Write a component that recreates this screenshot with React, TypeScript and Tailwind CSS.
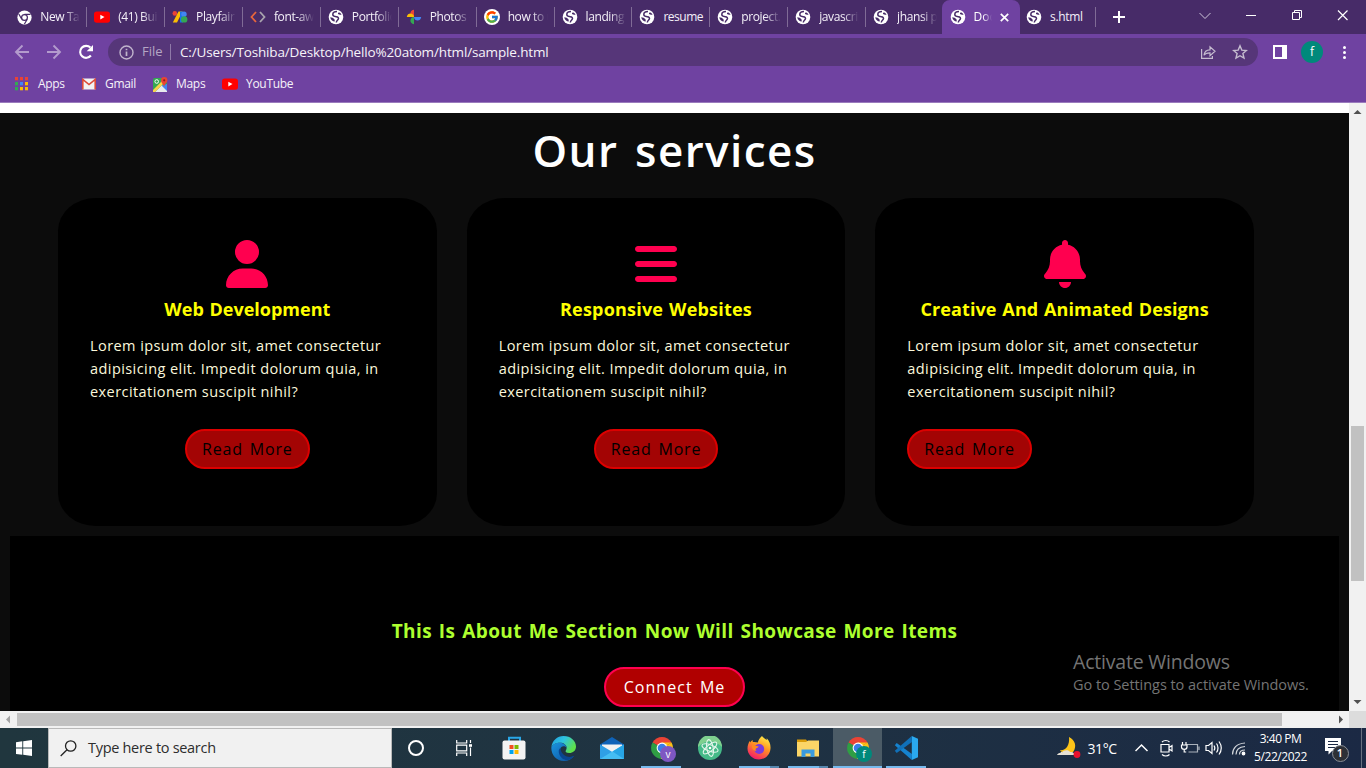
import type { ReactNode } from "react";
import { FaUser, FaBars, FaBell } from "react-icons/fa6";
import { FcGoogle } from "react-icons/fc";

function Globe() {
  return (
    <svg width="16" height="16" viewBox="0 0 16 16">
      <circle cx="8" cy="8" r="7.3" fill="#fff" />
      <path
        d="M9 2.600C6.800 2.600 4.800 3.800 4.800 5.600c0 1.700 1.700 2 3.400 2.100 2 .1 2.900 1.500 1.900 2.800-.8 1-1.600 1.100-1.800 3"
        fill="none"
        stroke="#472b68"
        strokeWidth="1.500"
      />
      <path d="M2.200 8.200c1.800.2 3.400.7 4.200 2 .5.800.2 1.500.4 2.300-2.300-.2-4.200-1.900-4.600-4.300zM10 3.800l1.500-.4c1 .6 1.700 1.300 2.100 2.200-1.300.4-2.700.2-3.600-.5z" fill="#472b68" />
    </svg>
  );
}

function ChromeMono() {
  return (
    <svg width="15" height="15" viewBox="0 0 16 16">
      <circle cx="8" cy="8" r="7.6" fill="#fff" />
      <circle cx="8" cy="8" r="3.1" fill="none" stroke="#472b68" strokeWidth="1.3" />
      <path d="M8 4.6h6.4M5.1 9.8 1.9 4.3M10.9 9.8 7.8 15.2" stroke="#472b68" strokeWidth="1.3" />
    </svg>
  );
}

function YouTube() {
  return (
    <svg width="16" height="16" viewBox="0 0 16 16">
      <rect y="2.4" width="16" height="11.4" rx="2.8" fill="#f00" />
      <path d="M6.3 5.7v4.8l4.2-2.4z" fill="#fff" />
    </svg>
  );
}

function Fonts() {
  return (
    <svg width="16" height="16" viewBox="0 0 16 16">
      <circle cx="2.8" cy="4.4" r="2.3" fill="#ea4335" />
      <path d="M6.500 2.500h4L5 13.500H.800z" fill="#fbbc04" />
      <rect x="8" y="2.500" width="3" height="11" fill="#1a73e8" />
      <circle cx="12" cy="5.200" r="2.700" fill="#4285f4" />
      <circle cx="12.200" cy="10.400" r="3.200" fill="#34a853" />
    </svg>
  );
}

function CodeMark() {
  return (
    <svg width="16" height="16" viewBox="0 0 16 16" fill="none" strokeWidth="1.8">
      <path d="M6 3 1.5 8 6 13" stroke="#e8663c" />
      <path d="M10 3 14.5 8 10 13" stroke="#a9a4ae" />
    </svg>
  );
}

function Photos() {
  return (
    <svg width="16" height="16" viewBox="0 0 16 16">
      <path d="M8 8V.800A3.700 3.700 0 0 0 8 8z" fill="#ea4335" />
      <path d="M8 8V.800c-5 .5-4.500 7.200 0 7.200z" fill="#ea4335" />
      <path d="M8 8h7.200c-.5-5-7.200-4.500-7.200 0z" fill="#4285f4" transform="rotate(0 8 8) scale(1 -1) translate(0 -16)" />
      <path d="M8 8v7.200c-5-.5-4.500-7.200 0-7.200z" fill="#34a853" />
      <path d="M8 8H.800c.5-5 7.200-4.500 7.200 0z" fill="#fbbc04" />
    </svg>
  );
}

function GoogleBadge() {
  return (
    <span className="flex size-4 items-center justify-center rounded-full bg-white">
      <FcGoogle size={14} />
    </span>
  );
}

const tabs: { title: string; icon: ReactNode }[] = [
  { title: "New Tab", icon: <ChromeMono /> },
  { title: "(41) Build", icon: <YouTube /> },
  { title: "Playfair D", icon: <Fonts /> },
  { title: "font-awes", icon: <CodeMark /> },
  { title: "Portfolio", icon: <Globe /> },
  { title: "Photos -", icon: <Photos /> },
  { title: "how to u", icon: <GoogleBadge /> },
  { title: "landing p", icon: <Globe /> },
  { title: "resume", icon: <Globe /> },
  { title: "project.h", icon: <Globe /> },
  { title: "javascrip", icon: <Globe /> },
  { title: "jhansi p", icon: <Globe /> },
];

function TabLabel({ children }: { children: ReactNode }) {
  return (
    <span className="ml-2 w-[40px] overflow-hidden whitespace-nowrap text-[12px] font-medium tracking-[-0.4px] text-[#f4f0f8] [mask-image:linear-gradient(to_right,#000_60%,transparent)]">
      {children}
    </span>
  );
}

function TabStrip() {
  return (
    <div className="flex h-[34px] items-center bg-[#472b68] pl-[9.3px]">
      {tabs.map((t, i) => (
        <div
          key={t.title}
          className={`flex h-[20px] shrink-0 items-center border-r pl-[7px] ${i === 11 ? "w-[76px] border-transparent" : "w-[77.9px] border-[#806b96]"}`}
        >
          <span className="flex size-4 shrink-0 items-center justify-center">{t.icon}</span>
          {t.title === "resume" ? (
            <span className="ml-2 whitespace-nowrap text-[12px] font-medium tracking-[-0.5px] text-[#f4f0f8]">{t.title}</span>
          ) : (
            <TabLabel>{t.title}</TabLabel>
          )}
        </div>
      ))}
      <div className="flex h-[34px] w-[78px] shrink-0 items-center rounded-t-[8px] bg-[#6f42a1] pl-[7.500px]">
        <span className="flex size-4 shrink-0 items-center justify-center">
          <Globe />
        </span>
        <span className="ml-2 w-[18px] overflow-hidden whitespace-nowrap text-[12px] font-medium text-white [mask-image:linear-gradient(to_right,#000_50%,transparent)]">
          Docum
        </span>
        <svg className="ml-[8px]" width="9" height="9" viewBox="0 0 9 9">
          <path d="M.8.8l7.4 7.4M8.2.8.8 8.2" stroke="#fff" strokeWidth="1.7" />
        </svg>
      </div>
      <div className="flex h-[20px] w-[76px] shrink-0 items-center border-r border-[#806b96] pl-[6px]">
        <span className="flex size-4 items-center justify-center">
          <Globe />
        </span>
        <span className="ml-2 whitespace-nowrap text-[12px] font-medium tracking-[-0.35px] text-[#f4f0f8]">s.html</span>
      </div>
      <svg className="ml-[17px] shrink-0" width="12" height="12" viewBox="0 0 12 12">
        <path d="M6 0v12M0 6h12" stroke="#fff" strokeWidth="2" />
      </svg>
      <svg className="mb-[5px] ml-[74px] shrink-0" width="150" height="12" viewBox="0 0 150 12" fill="none" stroke="#fff">
        <path d="M.5 4 6 9.500 11.500 4" stroke="#cfc6da" />
        <path d="M47 6.5h10" />
        <path d="M93.500 3.500h7v7h-7zM95.500 3.500v-2h7v7h-2" />
        <path d="M139 1.500l9.500 9.500M148.500 1.500 139 11" strokeWidth="1.200" />
      </svg>
    </div>
  );
}

function Toolbar() {
  return (
    <div className="flex h-9 items-center bg-[#6f42a1] pl-[14px]">
      <svg width="16" height="16" viewBox="0 0 16 16" fill="none" stroke="#b39bcd" strokeWidth="1.9">
        <path d="M15 8H2.500M8.500 1.500 2 8l6.500 6.500" />
      </svg>
      <svg className="ml-4" width="16" height="16" viewBox="0 0 16 16" fill="none" stroke="#b39bcd" strokeWidth="1.9">
        <path d="M1 8h12.500M7.500 1.500 14 8l-6.500 6.500" />
      </svg>
      <svg className="ml-4" width="16" height="16" viewBox="0 0 16 16">
        <path d="M12.900 11.500A6 6 0 1 1 12.400 3.600" fill="none" stroke="#fff" strokeWidth="2.100" />
        <path d="M15 1v6.300H8.700z" fill="#fff" />
      </svg>
      <div className="ml-[14px] flex h-7 w-[1150px] items-center rounded-full bg-[#563679] pl-[11px]">
        <svg width="15" height="15" viewBox="0 0 15 15" fill="none" stroke="#c0b4cc" strokeWidth="1.4">
          <circle cx="7.500" cy="7.500" r="6.500" />
          <path d="M7.500 6.500v4.500M7.500 3.700v1.500" strokeWidth="1.7" />
        </svg>
        <span className="ml-2 w-[28px] text-[13px] text-[#b5a6c4]">File</span>
        <span className="h-4 w-px bg-[#8f79a8]" />
        <span className="ml-[9px] w-[1000px] whitespace-nowrap text-[13.500px] tracking-[-0.150px] text-[#f6f3f9]">
          C:/Users/Toshiba/Desktop/hello%20atom/html/sample.html
        </span>
        <svg className="ml-[20px]" width="16" height="16" viewBox="0 0 16 16" fill="none" stroke="#c5bccf" strokeWidth="1.200">
          <path d="M1.600 5v9.400h10.800v-2.400" />
          <path d="M4 11.300c.4-4 2.600-5.400 6-5.500V2.800L15 7.200l-5 4.400V8.800c-3 0-4.800.6-6 2.500z" />
        </svg>
        <svg className="ml-4" width="16" height="16" viewBox="0 0 16 16" fill="none" stroke="#c5bccf" strokeWidth="1.400">
          <path d="M8 1.800l1.800 4.300 4.600.4-3.500 3 1.100 4.600L8 11.700l-4 2.400 1.100-4.600-3.500-3 4.600-.4z" />
        </svg>
      </div>
      <span className="ml-[15px] h-[14px] w-[14px] border-2 border-r-[5px] border-white" />
      <span className="ml-[14px] flex size-[22px] items-center justify-center rounded-full bg-[#00897b] text-[12px] text-white">
        f
      </span>
      <span className="ml-[20px] flex flex-col gap-[2px]">
        <i className="size-[3px] rounded-full bg-white" />
        <i className="size-[3px] rounded-full bg-white" />
        <i className="size-[3px] rounded-full bg-white" />
      </span>
    </div>
  );
}

const gridRows = ["#ea4335", "#ea4335", "#ea4335", "#34a853", "#4285f4", "#fbbc04", "#34a853", "#fbbc04", "#fbbc04"];

function Bookmarks() {
  return (
    <div className="flex h-[33px] items-center border-b border-[#9a7bbd] bg-[#6f42a1] pb-[4px] pl-[15px] text-[12px] font-medium tracking-[-0.3px] text-[#f6f3f9]">
      <svg width="14" height="14" viewBox="0 0 14 14">
        {gridRows.map((c, i) => (
          <rect key={i} x={(i % 3) * 5} y={Math.floor(i / 3) * 5} width="3" height="3.300" fill={c} />
        ))}
      </svg>
      <span className="ml-[9px] w-[44px]">Apps</span>
      <svg width="14" height="14" viewBox="0 0 14 14">
        <rect y="1.500" width="14" height="11" rx="1" fill="#f3f3f3" />
        <path d="M.800 12.500V2.500L7 7.500l6.200-5v10" fill="none" stroke="#dd4b39" strokeWidth="1.600" />
      </svg>
      <span className="ml-[9px] w-[48px]">Gmail</span>
      <svg width="15" height="15" viewBox="0 0 15 15">
        <rect y="1" width="14" height="14" rx="1.500" fill="#34a853" />
        <path d="M2 15 9 8l5 5v2z" fill="#e8eaed" />
        <path d="M8.500 8.500 14 14V7z" fill="#4285f4" />
        <path d="M0 13 10 3l2 2L2 15H0z" fill="#fbd24a" />
        <circle cx="3.700" cy="4.500" r="1.800" fill="none" stroke="#fff" />
        <path d="M11 10C10.500 7 8 6 8 3.200a3.200 3.200 0 0 1 6.400 0C14.400 6 11.500 7 11 10z" fill="#ea4335" />
        <circle cx="11.200" cy="3.300" r="1.100" fill="#8c1f16" />
      </svg>
      <span className="ml-[8px] w-[46px]">Maps</span>
      <YouTube />
      <span className="ml-[8px]">YouTube</span>
    </div>
  );
}

const services = [
  { title: "Web Development", icon: <FaUser size={48} />, track: "tracking-[0px]", button: "self-center" },
  { title: "Responsive Websites", icon: <FaBars size={48} />, track: "tracking-[0.2px]", button: "self-center" },
  { title: "Creative And Animated Designs", icon: <FaBell size={48} />, track: "tracking-[0.1px]", button: "self-start" },
];

const blurb = ["Lorem ipsum dolor sit, amet consectetur", "adipisicing elit. Impedit dolorum quia, in", "exercitationem suscipit nihil?"];

function Services() {
  return (
    <section>
      <h1 className="h-[85px] pt-[7px] text-center text-[44px] font-semibold leading-[60px] tracking-[1.400px] text-white [word-spacing:4px]">
        Our services
      </h1>
      <div className="flex gap-[30px] pl-[58px]">
        {services.map((s) => (
          <article key={s.title} className="flex h-[328px] w-[378.670px] shrink-0 flex-col rounded-[10%] bg-black px-8 pt-[42px]">
            <div className="flex h-12 justify-center text-[#ff004f]">{s.icon}</div>
            <h2 className={`mt-[7px] h-7 whitespace-nowrap text-center text-[18px] font-bold leading-7 text-[#ffff00] [word-spacing:1px] ${s.track}`}>
              {s.title}
            </h2>
            <div className="mt-[11px] text-[14.500px] leading-[23px] tracking-[0.430px] text-[#fbf8dc]">
              {blurb.map((line) => (
                <p key={line} className="whitespace-nowrap">
                  {line}
                </p>
              ))}
            </div>
            <button
              className={`mt-[26px] h-10 w-[124.500px] rounded-full border-2 border-[#dc0000] bg-[#a30404] text-[16px] leading-[36px] tracking-[0.800px] text-black [word-spacing:2px] ${s.button}`}
            >
              Read More
            </button>
          </article>
        ))}
      </div>
    </section>
  );
}

function About() {
  return (
    <section className="mx-[10px] mt-[10px] flex flex-1 flex-col items-center bg-black pt-[81px]">
      <h2 className="h-7 whitespace-nowrap text-[19px] font-bold leading-7 tracking-[0.400px] text-[#adff2f] [word-spacing:1.500px]">
        This Is About Me Section Now Will Showcase More Items
      </h2>
      <button className="mt-[22px] h-10 w-[141px] shrink-0 rounded-full border-2 border-[#ff004f] bg-[#b00000] text-[16px] leading-[36px] tracking-[1.050px] text-white [word-spacing:2px]">
        Connect Me
      </button>
    </section>
  );
}

function VerticalScrollbar() {
  return (
    <div className="flex w-[17px] flex-col items-center bg-[#f1f1f1]">
      <svg width="17" height="17" viewBox="0 0 17 17">
        <path d="M4.500 11h8l-4-4z" fill="#505050" />
      </svg>
      <div className="mt-[306px] h-[155px] w-[13px] bg-[#c1c1c1]" />
      <svg className="mt-auto" width="17" height="17" viewBox="0 0 17 17">
        <path d="M4.500 6h8l-4 4z" fill="#505050" />
      </svg>
    </div>
  );
}

function HorizontalScrollbar() {
  return (
    <div className="flex h-[17px] items-center bg-[#f1f1f1]">
      <svg width="17" height="17" viewBox="0 0 17 17">
        <path d="M10 4.500v8l-4-4z" fill="#a3a3a3" />
      </svg>
      <div className="h-[13px] w-[1265px] bg-[#c1c1c1]" />
      <svg className="ml-[50px]" width="17" height="17" viewBox="0 0 17 17">
        <path d="M7 4.500v8l4-4z" fill="#505050" />
      </svg>
      <div className="h-full flex-1 bg-[#dcdcdc]" />
    </div>
  );
}

function ChromeColor({ badge, color }: { badge: string; color: string }) {
  return (
    <span className="relative left-px">
      <svg width="24" height="24" viewBox="0 0 24 24">
        <path d="M12 12 2.500 6.500a11 11 0 0 1 19 0z" fill="#ea4335" />
        <path d="M12 12 2.500 6.500a11 11 0 0 0 8.500 16.400z" fill="#2f9e44" />
        <path d="M12 12 21.500 6.500A11 11 0 0 1 11 22.900z" fill="#fbc116" />
        <path d="M12 6.500h9.500L12 12z" fill="#fbc116" />
        <circle cx="12" cy="12" r="5.400" fill="#fff" />
        <circle cx="12" cy="12" r="4.300" fill="#3b7de8" />
      </svg>
      <span
        className={`absolute left-[10px] top-[10px] flex size-[16px] items-center justify-center rounded-full text-[10px] leading-none text-white ${color}`}
      >
        {badge}
      </span>
    </span>
  );
}

function Store() {
  return (
    <svg width="24" height="24" viewBox="0 0 24 24">
      <path d="M7 6V1.800h11V6" fill="none" stroke="#29a7e8" strokeWidth="2" />
      <rect x=".500" y="4.500" width="23" height="19" rx="2" fill="#f3f3f3" />
      <path d="M7.500 9h4v4h-4z" fill="#f25022" />
      <path d="M12.500 9h4v4h-4z" fill="#7fba00" />
      <path d="M7.500 14h4v4h-4z" fill="#00a4ef" />
      <path d="M12.500 14h4v4h-4z" fill="#ffb900" />
    </svg>
  );
}

function Edge() {
  return (
    <svg width="25" height="25" viewBox="0 0 24 24">
      <defs>
        <linearGradient id="edgeTop" x1="0" y1="0" x2="1" y2=".5">
          <stop offset="0" stopColor="#1f9de0" />
          <stop offset=".5" stopColor="#2fc4e0" />
          <stop offset="1" stopColor="#5fe04a" />
        </linearGradient>
        <linearGradient id="edgeLow" x1="0" y1="0" x2="1" y2="1">
          <stop offset="0" stopColor="#1b95de" />
          <stop offset="1" stopColor="#0b4f9e" />
        </linearGradient>
      </defs>
      <path d="M.3 11C1 4.500 6 0 12 0c7 0 12 4.800 12 10 0 4-3 6.300-6.500 6.300-3 0-4-1.300-3.300-2.400.5-.8.8-1.400.8-2.400C15 8.500 12 6.500 9 6.500 4.500 6.500 1.500 8.500.3 11z" fill="url(#edgeTop)" />
      <path d="M.3 11C1.500 8 4.500 6.500 8 6.500c3.500 0 6.500 1.800 7 4.500-1-1-2.200-1.300-3.200-1.200C9.500 10 8.500 12 8.800 14.500c.5 4 4 6.800 8 6.500 2-.1 4-1 5.500-2C20 22.300 16.500 24 12.500 24 5.500 24 .2 18.500.3 11z" fill="url(#edgeLow)" />
      <path d="M8.800 11.500c-1.500 1.200-1.800 3.500-.8 6 1.300 3.500 4.500 6 8.500 5.500 2.500-.8 4.500-2.200 5.800-4-3 1.500-7 1.500-9.800-.8-2-1.700-3.200-4-3.700-6.700z" fill="#0a4590" />
    </svg>
  );
}

function Mail() {
  return (
    <svg width="24" height="24" viewBox="0 0 24 24">
      <path d="M0 8.500 12 1l12 7.500V12H0z" fill="#0f63b8" />
      <path d="M2 8.500h20v4L12 17 2 12z" fill="#f2f2f2" />
      <path d="M0 8.500 14 17 24 23H0z" fill="#2f9fe6" />
      <path d="M24 8.500 0 23h24z" fill="#45bdf3" />
      <path d="M24 8.500 12.500 15.500 24 23z" fill="#27a5e6" />
    </svg>
  );
}

function Atom() {
  return (
    <svg width="24" height="24" viewBox="0 0 24 24">
      <circle cx="12" cy="12" r="12" fill="#45ba88" />
      <path d="M0 11a12 12 0 0 1 24 0 16 16 0 0 0-24 0z" fill="#7fd08f" />
      <g fill="none" stroke="#e5f6ec" strokeWidth="1.100">
        <ellipse cx="12" cy="12" rx="8.500" ry="3.200" transform="rotate(20 12 12)" />
        <ellipse cx="12" cy="12" rx="8.500" ry="3.200" transform="rotate(80 12 12)" />
        <ellipse cx="12" cy="12" rx="8.500" ry="3.200" transform="rotate(140 12 12)" />
      </g>
      <circle cx="12" cy="12" r="1.300" fill="#fff" />
    </svg>
  );
}

function Firefox() {
  return (
    <svg width="24" height="24" viewBox="0 0 24 24">
      <defs>
        <linearGradient id="fox" x1=".8" y1="0" x2=".3" y2="1">
          <stop offset="0" stopColor="#fff24a" />
          <stop offset=".45" stopColor="#ff9422" />
          <stop offset="1" stopColor="#f5156c" />
        </linearGradient>
      </defs>
      <path d="M15 0c1.500 2 3 2.500 4.500 4 .3-.5.3-1 .2-1.800C22.500 5 23.800 8.500 23.500 12.500 23 19 18 23.500 12 23.500 5.500 23.500.5 18.500.5 12.500c0-3 1-5.500 2.200-7.500l.6 1.600C4 5 4.800 4.500 5.600 4l.2 2c1.800-.2 3.500 0 5 .5.6-2.500 2-4.500 4.200-6.500z" fill="url(#fox)" />
      <circle cx="12.200" cy="13" r="5" fill="#7a3bdc" />
      <path d="M5 9c2 0 3.500 1.200 6 1.300 1 .1.500 1.300-1.200 1.700-1.500.4-1.500 1.800-.3 2.700-2.500.3-5-1.500-4.500-5.700z" fill="#ff8a1f" />
    </svg>
  );
}

function Explorer() {
  return (
    <svg width="24" height="24" viewBox="0 0 24 24">
      <path d="M1 3.500h9l2 2.500H1z" fill="#d99b09" />
      <path d="M1 6h9l2-1.500h11V20.500H1z" fill="#fbd567" />
      <path d="M5.500 21v-7.500h13V21h-4v-3.500h-5V21z" fill="#3a9be0" />
    </svg>
  );
}

function VsCode() {
  return (
    <svg width="24" height="24" viewBox="0 0 24 24">
      <path d="M17.800 0 24 2.700v18.600L17.800 24z" fill="#2aa9ef" />
      <path d="M17.800 24 .800 9.200 2.700 7 18 18z" fill="#1583cf" />
      <path d="M17.800 0 .800 14.800 2.700 17 18 6z" fill="#1070b8" />
    </svg>
  );
}

const apps: { icon: ReactNode; line: string; extra?: boolean; active?: boolean }[] = [
  { icon: <Store />, line: "bg-transparent" },
  { icon: <Edge />, line: "bg-transparent" },
  { icon: <Mail />, line: "bg-transparent" },
  { icon: <ChromeColor badge="v" color="bg-[#7e57c2]" />, line: "bg-[#76b9ed]" },
  { icon: <Atom />, line: "bg-transparent" },
  { icon: <Firefox />, line: "bg-[#76b9ed]", extra: true },
  { icon: <Explorer />, line: "bg-[#76b9ed]", extra: true },
  { icon: <ChromeColor badge="f" color="bg-[#00897b]" />, line: "bg-[#76b9ed]", active: true },
  { icon: <VsCode />, line: "bg-[#76b9ed]" },
];

function Taskbar() {
  return (
    <div className="flex h-10 bg-linear-to-r from-[#20363e] via-[#1f3342] to-[#1b2944]">
      <div className="flex w-12 items-center justify-center">
        <svg width="16" height="16" viewBox="0 0 16 16" fill="#fff">
          <path d="M0 2.200 6.300 1.300v6.300H0zM7.200 1.200 16 0v7.600H7.200zM0 8.500h6.300v6.300L0 13.900zM7.200 8.500H16V16l-8.800-1.200z" />
        </svg>
      </div>
      <div className="flex w-[344px] items-center border border-[#b9b9b9] bg-[#f1f1f1] pl-[11px]">
        <svg width="17" height="17" viewBox="0 0 17 17" fill="none" stroke="#222" strokeWidth="1.300">
          <circle cx="10.700" cy="6" r="5.200" />
          <path d="M7 9.800.700 16" />
        </svg>
        <span className="ml-[11px] whitespace-nowrap text-[14.500px] tracking-[-0.300px] text-[#2d2d2d]">Type here to search</span>
      </div>
      <div className="flex w-12 items-center justify-center">
        <span className="size-4 rounded-full border-2 border-white" />
      </div>
      <div className="flex w-[49.500px] items-center justify-center">
        <svg width="17" height="16" viewBox="0 0 17 16" fill="none" stroke="#fff" strokeWidth="1.200">
          <path d="M.700 0v3h10V0M.700 16v-3h10v3M.700 5.200h10v5.600H.700zM14.500 0v3M14.500 7.500V16" />
          <path d="M13 4.200h3v2.600h-3z" fill="#fff" stroke="none" />
        </svg>
      </div>
      {apps.map((a, i) => (
        <div key={i} className={`flex w-[49px] flex-col items-center ${a.active ? "bg-[#4b5b66]" : ""}`}>
          <div className="flex h-[38px] items-center justify-center pt-[2px]">{a.icon}</div>
          <div className={`flex h-[2px] ${a.active ? "w-full" : "w-10"} ${a.line}`}>
            {a.extra && <span className="ml-auto w-[9px] bg-[#5686ae]" />}
          </div>
        </div>
      ))}
      <div className="ml-[126px] flex items-center">
        <svg width="24" height="24" viewBox="0 0 24 24">
          <path d="M12 1c6 3 8 9 4.500 14.500C13 19 6 18.500 3 14c5 1 10-4 9-13z" fill="#fcc419" />
          <path d="M0 19c1-2.500 4-2 5-2.500 1.500-3 7-3 8-.5 3-.5 4.500 1 4.500 3z" fill="#e6e0d4" />
          <circle cx="20" cy="18.500" r="3.400" fill="#e8112d" />
        </svg>
        <span className="ml-[7px] w-[47px] whitespace-nowrap text-[14px] tracking-[-0.400px] text-white">31°C</span>
        <svg width="112" height="18" viewBox="0 0 112 18" fill="none" stroke="#fff" strokeWidth="1.200">
          <path d="M.500 12 6.500 6l6 6" strokeWidth="1.500" />
          <path d="M27 3c2-2 5.500-2 7.500 0M27 15.500c2 2 5.500 2 7.500 0M26 5.500h8v7.500h-8zM34 8.500l3-2v5.500l-3-2" />
          <path d="M51.500 5.500H62.500v7.500h-9M64 7.500v3.500" stroke="#aab2bb" />
          <path d="M47.500 3v3M51 3v3M46.500 6h5.500v2c0 3-5.500 3-5.500 0zM49.200 10v3h2" />
          <path d="M71 6.500h2.500l3.500-3v11l-3.500-3H71zM79 6.500c1 1.500 1 3.500 0 5M81.500 4.500c2 2.500 2 6.500 0 9M84 2.500c2.800 4 2.800 9 0 13" />
          <path d="M97.500 15.500c0-6 4-11 12.500-11.500M101 15.500c0-4.500 3-7.500 9-8M104.500 15.500c0-2.500 2-4.500 5.500-4.500" stroke="#d3d7dc" />
          <circle cx="108.500" cy="14.500" r="1.300" fill="#fff" />
        </svg>
        <div className="ml-[4px] flex w-[60px] flex-col items-center whitespace-nowrap text-[12px] leading-[18px] tracking-[-0.450px] text-white">
          <span>3:40 PM</span>
          <span>5/22/2022</span>
        </div>
        <div className="relative ml-[14px] h-[20px] w-[17px]">
          <svg width="17" height="17" viewBox="0 0 17 17">
            <path d="M0 0h16v13H7l-3.500 3.500V13H0z" fill="#fff" />
            <path d="M3 3.500h10M3 6.500h10M3 9.500h7" stroke="#1b2944" />
          </svg>
          <span className="absolute left-[7px] top-[7px] flex size-[17px] items-center justify-center rounded-full border border-[#8b8f96] bg-[#2d3036] text-[11px] font-semibold text-white">
            1
          </span>
        </div>
      </div>
      <div className="ml-auto mr-[4px] w-px bg-[#66707f]" />
    </div>
  );
}

export default function App() {
  return (
    <div className="relative flex h-[768px] w-[1366px] flex-col overflow-hidden font-['Open_Sans','Noto_Sans',sans-serif]">
      <TabStrip />
      <Toolbar />
      <Bookmarks />
      <div className="flex h-[608px]">
        <main className="flex w-[1349px] flex-col overflow-hidden border-t-[10px] border-white bg-[#0c0c0c]">
          <Services />
          <About />
        </main>
        <VerticalScrollbar />
      </div>
      <HorizontalScrollbar />
      <Taskbar />
      <div className="absolute left-[1073px] top-[649px] whitespace-nowrap text-[#747474]">
        <p className="text-[19.500px] leading-[26px] tracking-[-0.200px]">Activate Windows</p>
        <p className="text-[14.500px] leading-[20px] tracking-[-0.050px]">Go to Settings to activate Windows.</p>
      </div>
    </div>
  );
}
